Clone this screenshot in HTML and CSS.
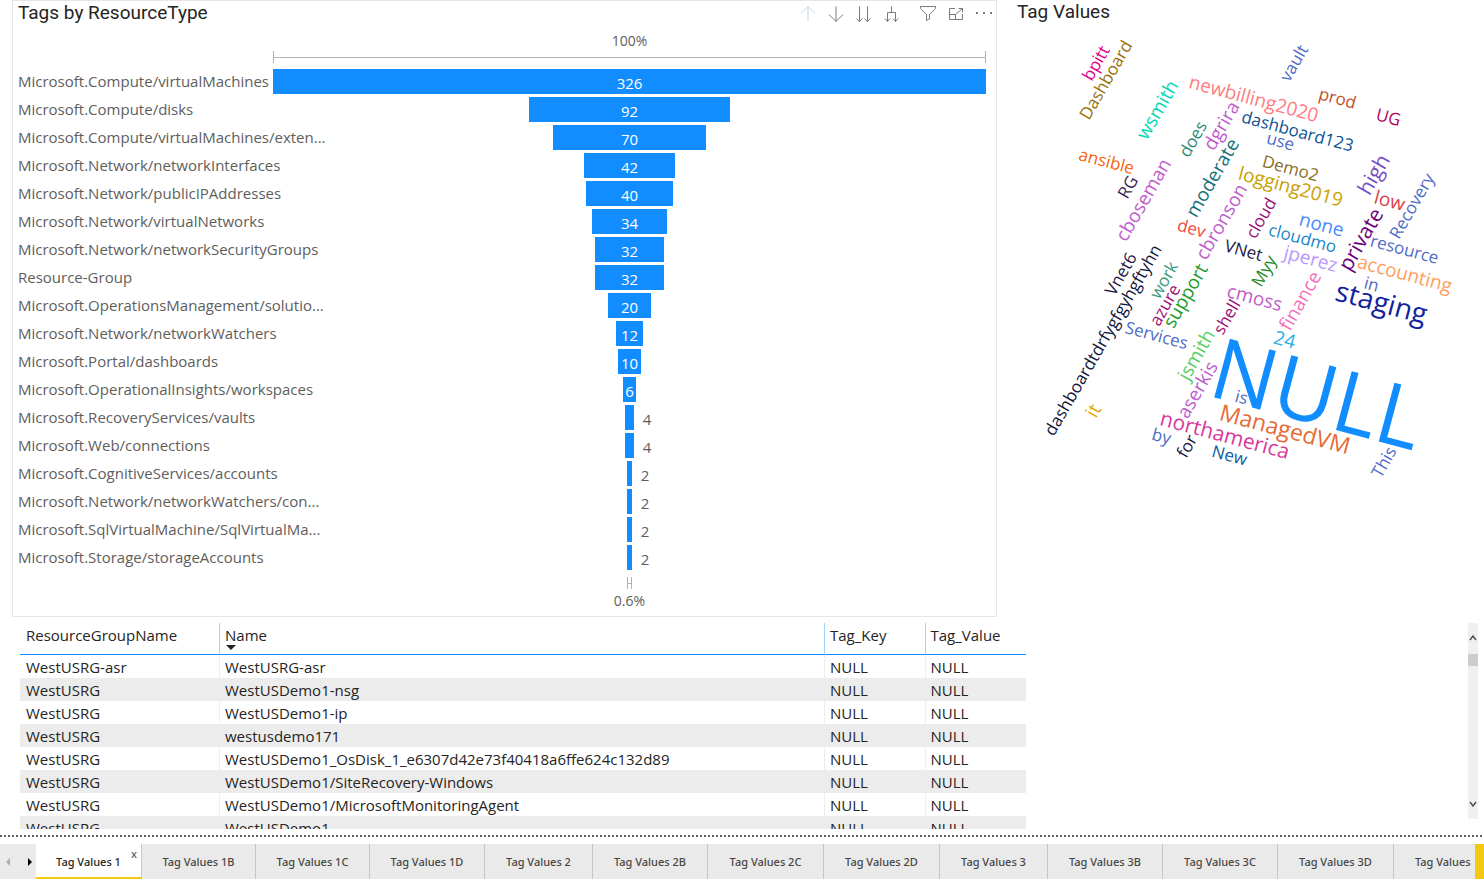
FILE: index.html
```html
<!DOCTYPE html>
<html lang="en">
<head>
<meta charset="utf-8">
<title>Tag Values</title>
<link rel="stylesheet" href="styles.css">
</head>
<body>
<main class="report">
  <div class="top">
    <section class="panel">
      <header class="panel-head">
        <h2 class="title">Tags by ResourceType</h2>
        <div class="tools">
          <button class="tool faint" aria-label="Drill up"><svg viewBox="0 0 16 16"><path d="M8 15.500V.5M1 7.500l7-7 7 7"/></svg></button>
          <button class="tool" aria-label="Drill down"><svg viewBox="0 0 16 16"><path d="M8 .5v15M1 8.500l7 7 7-7"/></svg></button>
          <button class="tool" aria-label="Go to next level"><svg viewBox="0 0 16 16"><path d="M3.500 .5v15M.5 12.500l3 3 3-3M11.500 .5v15M8.500 12.500l3 3 3-3"/></svg></button>
          <button class="tool wide" aria-label="Expand all down one level"><svg viewBox="0 0 16 16"><path d="M7.500 .5v6M3.500 15.500v-9h8v9M1 12.500l2.500 3 2.500-3M9 12.500l2.500 3 2.500-3"/></svg></button>
          <button class="tool" aria-label="Filters"><svg viewBox="0 0 16 16"><path d="M.5 .5h15v2L9.500 8.500v4.500L6.500 14.500V8.500L.5 2.500z"/></svg></button>
          <button class="tool" aria-label="Focus mode"><svg viewBox="0 0 16 16"><path d="M7 2.500H1.500v11h13V8M1.500 8.500h6v5M7.500 8.500l7-6M10.500 2.500h4v4"/></svg></button>
          <button class="tool dots" aria-label="More options"><svg viewBox="0 0 16 16"><path d="M0 6h2v2H0zM7 6h2v2H7zM14 6h2v2h-2z"/></svg></button>
        </div>
      </header>
      <div class="funnel">
        <div class="scale"><span>100%</span><i class="bracket"></i></div>
        <div class="row"><span class="name">Microsoft.Compute/virtualMachines</span><div class="bar" style="width:100%">326</div></div>
        <div class="row"><span class="name">Microsoft.Compute/disks</span><div class="bar" style="width:28.2%">92</div></div>
        <div class="row"><span class="name">Microsoft.Compute/virtualMachines/exten...</span><div class="bar" style="width:21.5%">70</div></div>
        <div class="row"><span class="name">Microsoft.Network/networkInterfaces</span><div class="bar" style="width:12.9%">42</div></div>
        <div class="row"><span class="name">Microsoft.Network/publicIPAddresses</span><div class="bar" style="width:12.3%">40</div></div>
        <div class="row"><span class="name">Microsoft.Network/virtualNetworks</span><div class="bar" style="width:10.4%">34</div></div>
        <div class="row"><span class="name">Microsoft.Network/networkSecurityGroups</span><div class="bar" style="width:9.8%">32</div></div>
        <div class="row"><span class="name">Resource-Group</span><div class="bar" style="width:9.8%">32</div></div>
        <div class="row"><span class="name">Microsoft.OperationsManagement/solutio...</span><div class="bar" style="width:6.1%">20</div></div>
        <div class="row"><span class="name">Microsoft.Network/networkWatchers</span><div class="bar" style="width:3.7%">12</div></div>
        <div class="row"><span class="name">Microsoft.Portal/dashboards</span><div class="bar" style="width:3.1%">10</div></div>
        <div class="row"><span class="name">Microsoft.OperationalInsights/workspaces</span><div class="bar" style="width:1.8%">6</div></div>
        <div class="row"><span class="name">Microsoft.RecoveryServices/vaults</span><div class="bar" style="width:1.2%"><span class="out">4</span></div></div>
        <div class="row"><span class="name">Microsoft.Web/connections</span><div class="bar" style="width:1.2%"><span class="out">4</span></div></div>
        <div class="row"><span class="name">Microsoft.CognitiveServices/accounts</span><div class="bar" style="width:0.6%"><span class="out">2</span></div></div>
        <div class="row"><span class="name">Microsoft.Network/networkWatchers/con...</span><div class="bar" style="width:0.6%"><span class="out">2</span></div></div>
        <div class="row"><span class="name">Microsoft.SqlVirtualMachine/SqlVirtualMa...</span><div class="bar" style="width:0.6%"><span class="out">2</span></div></div>
        <div class="row"><span class="name">Microsoft.Storage/storageAccounts</span><div class="bar" style="width:0.6%"><span class="out">2</span></div></div>
        <div class="scale end"><i class="bracket" style="width:0.8%"></i><span>0.6%</span></div>
      </div>
    </section>
    <section class="cloud">
      <h2 class="title">Tag Values</h2>
      <svg class="words" viewBox="1017 24 467 560" text-anchor="middle">
        <g class="s">
          <text fill="#e3008c" transform="translate(1101 66) rotate(-60)">bpitt</text>
          <text fill="#986f0b" transform="translate(1111 83) rotate(-60)">Dashboard</text>
          <text fill="#2e8b75" transform="translate(1198 142) rotate(-60)">does</text>
          <text fill="#0b5394" transform="translate(1296 137) rotate(15)">dashboard123</text>
          <text fill="#f7630c" transform="translate(1105 167) rotate(15)">ansible</text>
          <text fill="#3b1d52" transform="translate(1133 190) rotate(-60)">RG</text>
          <text fill="#f0483e" transform="translate(1190 234) rotate(15)">dev</text>
          <text fill="#4f6bc6" transform="translate(1299 66) rotate(-60)">vault</text>
          <text fill="#c0501f" transform="translate(1336 104) rotate(15)">prod</text>
          <text fill="#b4005a" transform="translate(1387 123) rotate(15)">UG</text>
          <text fill="#4f6bc6" transform="translate(1279 147) rotate(15)">use</text>
          <text fill="#8a6d1d" transform="translate(1289 174) rotate(15)">Demo2</text>
          <text fill="#4f6bc6" transform="translate(1417 209) rotate(-60)">Recovery</text>
          <text fill="#9a1078" transform="translate(1266 221) rotate(-60)">cloud</text>
          <text fill="#1a86c7" transform="translate(1301 244) rotate(15)">cloudmo</text>
          <text fill="#241a45" transform="translate(1242 256) rotate(15)">VNet</text>
          <text fill="#4f6bc6" transform="translate(1403 255) rotate(15)">resource</text>
          <text fill="#4f6bc6" transform="translate(1370 290) rotate(15)">in</text>
          <text fill="#241a45" transform="translate(1126 277) rotate(-60)">Vnet6</text>
          <text fill="#12163c" transform="translate(1108 343) rotate(-60)">dashboardtdrfygfgyhgftyhn</text>
          <text fill="#3a9a80" transform="translate(1169 283) rotate(-60)">work</text>
          <text fill="#9a1078" transform="translate(1170 308) rotate(-60)">azure</text>
          <text fill="#1c8a1c" transform="translate(1269 274) rotate(-60)">Myy</text>
          <text fill="#9a1078" transform="translate(1232 320) rotate(-60)">shell</text>
          <text fill="#4f6bc6" transform="translate(1155 341) rotate(15)">Services</text>
          <text fill="#4f6bc6" transform="translate(1240 403) rotate(15)">is</text>
          <text fill="#4f6bc6" transform="translate(1160 442) rotate(15)">by</text>
          <text fill="#241a45" transform="translate(1192 449) rotate(-60)">for</text>
          <text fill="#0b5ba8" transform="translate(1228 461) rotate(15)">New</text>
          <text fill="#4f6bc6" transform="translate(1389 465) rotate(-60)">This</text>
        </g>
        <g class="m">
          <text fill="#dca800" transform="translate(1099 414) rotate(-60)">it</text>
          <text fill="#00d8b4" transform="translate(1163 113) rotate(-60)">wsmith</text>
          <text fill="#ff7c80" transform="translate(1252 105) rotate(15)">newbilling2020</text>
          <text fill="#c05bcc" transform="translate(1227 129) rotate(-60)">dgrira</text>
          <text fill="#c05bcc" transform="translate(1149 203) rotate(-60)">cboseman</text>
          <text fill="#137078" transform="translate(1218 181) rotate(-60)">moderate</text>
          <text fill="#c05bcc" transform="translate(1227 225) rotate(-60)">cbronson</text>
          <text fill="#c8a000" transform="translate(1289 193) rotate(15)">logging2019</text>
          <text fill="#dc3f45" transform="translate(1388 207) rotate(15)">low</text>
          <text fill="#4589ff" transform="translate(1320 231) rotate(15)">none</text>
          <text fill="#b898ff" transform="translate(1309 265) rotate(15)">jperez</text>
          <text fill="#ff9d5c" transform="translate(1403 280) rotate(15)">accounting</text>
          <text fill="#1c9a28" transform="translate(1191 299) rotate(-60)">support</text>
          <text fill="#c05bcc" transform="translate(1253 304) rotate(15)">cmoss</text>
          <text fill="#f56fc0" transform="translate(1306 304) rotate(-60)">finance</text>
          <text fill="#2cb0e8" transform="translate(1283 346) rotate(15)">24</text>
          <text fill="#55d060" transform="translate(1202 358) rotate(-60)">jsmith</text>
          <text fill="#c05bcc" transform="translate(1203 393) rotate(-60)">aserkis</text>
        </g>
        <g class="l">
          <text fill="#744ec2" transform="translate(1380 178) rotate(-60)">high</text>
          <text fill="#6b007b" transform="translate(1367 243) rotate(-60)">private</text>
          <text fill="#d9379c" transform="translate(1223 442) rotate(15)">northamerica</text>
        </g>
        <text class="xm" fill="#e66c37" transform="translate(1283 437) rotate(15)">ManagedVM</text>
        <text class="xl" fill="#12239e" transform="translate(1379 312) rotate(15)">staging</text>
        <text class="xxl" fill="#118dff" transform="translate(1310 423) rotate(15)">NULL</text>
      </svg>
    </section>
  </div>
  <section class="grid">
    <table class="data">
      <colgroup><col class="c-group"><col class="c-name"><col class="c-tag"><col class="c-tag"></colgroup>
      <thead><tr><th>ResourceGroupName</th><th class="sorted">Name</th><th>Tag_Key</th><th>Tag_Value</th></tr></thead>
      <tbody>
        <tr><td>WestUSRG-asr</td><td>WestUSRG-asr</td><td>NULL</td><td>NULL</td></tr>
        <tr><td>WestUSRG</td><td>WestUSDemo1-nsg</td><td>NULL</td><td>NULL</td></tr>
        <tr><td>WestUSRG</td><td>WestUSDemo1-ip</td><td>NULL</td><td>NULL</td></tr>
        <tr><td>WestUSRG</td><td>westusdemo171</td><td>NULL</td><td>NULL</td></tr>
        <tr><td>WestUSRG</td><td>WestUSDemo1_OsDisk_1_e6307d42e73f40418a6ffe624c132d89</td><td>NULL</td><td>NULL</td></tr>
        <tr><td>WestUSRG</td><td>WestUSDemo1/SiteRecovery-Windows</td><td>NULL</td><td>NULL</td></tr>
        <tr><td>WestUSRG</td><td>WestUSDemo1/MicrosoftMonitoringAgent</td><td>NULL</td><td>NULL</td></tr>
        <tr><td>WestUSRG</td><td>WestUSDemo1</td><td>NULL</td><td>NULL</td></tr>
      </tbody>
    </table>
    <div class="scroll">
      <button class="step" aria-label="Scroll up"><svg viewBox="0 0 10 10"><path d="M2 7l3-4 3 4"/></svg></button>
      <span class="thumb"></span>
      <button class="step" aria-label="Scroll down"><svg viewBox="0 0 10 10"><path d="M2 3l3 4 3-4"/></svg></button>
    </div>
  </section>
</main>
<div class="divider"></div>
<nav class="tabs">
  <div class="pager">
    <button class="page-btn off" aria-label="Previous pages"><svg viewBox="0 0 4 8"><path d="M4 0v8L0 4z"/></svg></button>
    <button class="page-btn" aria-label="Next pages"><svg viewBox="0 0 4 8"><path d="M0 0v8l4-4z"/></svg></button>
  </div>
  <div class="strip">
    <a class="tab active" href="#">Tag Values 1<span class="close">x</span></a>
    <a class="tab slim" href="#">Tag Values 1B</a>
    <a class="tab slim" href="#">Tag Values 1C</a>
    <a class="tab" href="#">Tag Values 1D</a>
    <a class="tab short" href="#">Tag Values 2</a>
    <a class="tab" href="#">Tag Values 2B</a>
    <a class="tab wide" href="#">Tag Values 2C</a>
    <a class="tab wide" href="#">Tag Values 2D</a>
    <a class="tab short" href="#">Tag Values 3</a>
    <a class="tab" href="#">Tag Values 3B</a>
    <a class="tab" href="#">Tag Values 3C</a>
    <a class="tab wide" href="#">Tag Values 3D</a>
    <a class="tab last" href="#">Tag Values</a>
  </div>
  <button class="add" aria-label="New page"></button>
</nav>
</body>
</html>
```
FILE: styles.css
```css
* { box-sizing: border-box; }
body {
  margin: 0;
  min-height: 100vh;
  display: flex;
  flex-direction: column;
  overflow: hidden;
  background: #fff;
  color: #252423;
  font: 15px/20px "Open Sans", "Noto Sans", sans-serif;
}
button { padding: 0; border: 0; background: none; }
svg { display: block; }

.report { flex: 1; }
.top {
  display: grid;
  grid-template-columns: minmax(0, 985fr) minmax(0, 487fr);
  padding-left: 12px;
}
.title {
  margin: 0;
  font: 400 19px/24px Roboto, sans-serif;
}

.panel {
  border: 1px solid #e6e6e6;
  padding: 0 10px 5px 5px;
}
.panel-head { display: flex; justify-content: space-between; }
.tools { display: flex; gap: 12px; padding-top: 5px; margin-right: -6px; }
.tool { width: 16px; height: 16px; color: #7c7a78; }
.tool.wide { margin-right: 8px; }
.tool.faint { color: #c5d3ea; }
.tool path { fill: none; stroke: currentColor; }
.tool.dots path { fill: currentColor; stroke: none; }

.funnel { color: #605e5c; padding-top: 6px; }
.scale {
  margin-left: 255px;
  display: flex;
  flex-direction: column;
  align-items: center;
  font-size: 14px;
}
.bracket {
  width: 100%;
  height: 12px;
  margin: 0 0 6px;
  border: solid #b3b0ad;
  border-width: 0 1px;
  background: linear-gradient(#b3b0ad, #b3b0ad) center / 100% 1px no-repeat;
}
.scale.end .bracket { margin: 4px 0 2px; }
.row {
  display: grid;
  grid-template-columns: 255px 1fr;
  height: 28px;
}
.name {
  grid-area: 1 / 1 / 2 / 3;
  line-height: 24px;
}
.bar {
  grid-area: 1 / 2 / 2 / 3;
  justify-self: center;
  position: relative;
  height: 25px;
  line-height: 28px;
  background: #118dff;
  color: #fff;
  text-align: center;
}
.out {
  position: absolute;
  left: 100%;
  padding-left: 9px;
  color: #605e5c;
}

.cloud { padding-left: 20px; }
.words { width: 100%; height: auto; }
.s { font-size: 17px; }
.m { font-size: 19px; }
.l { font-size: 21px; }
.xm { font-size: 23px; }
.xl { font-size: 28px; }
.xxl { font-size: 85px; }

.grid {
  display: flex;
  justify-content: space-between;
  height: 206px;
  margin-top: 6px;
  padding: 0 6px 0 20px;
  overflow: hidden;
}
.data {
  flex: 0 1 1006px;
  width: 1006px;
  table-layout: fixed;
  border-collapse: separate;
  border-spacing: 0;
}
.c-group { width: 200px; }
.c-name { width: 605px; }
.data th, .data td {
  height: 23px;
  padding: 1px 5px 0;
  border-right: 1px solid #eee;
  line-height: 22px;
  font-weight: 400;
  text-align: left;
  white-space: nowrap;
}
.data th:first-child, .data td:first-child { padding-left: 6px; }
.data th {
  position: relative;
  height: 32px;
  padding-top: 0;
  padding-bottom: 8px;
  border-bottom: 1px solid #118dff;
  border-right-color: #a0d1ff;
}
.data th:last-child, .data td:last-child { border-right: 0; }
.data tbody tr:nth-child(even) td { background: #edecec; border-right-color: #edecec; }
.sorted::after {
  content: "";
  position: absolute;
  left: 6px;
  bottom: 4px;
  border: 5px solid transparent;
  border-top-color: #252423;
  border-bottom: 0;
}
.scroll {
  display: flex;
  flex-direction: column;
  width: 10px;
  height: 196px;
  background: #f0f0f0;
}
.step { height: 30px; }
.step path { fill: none; stroke: #505050; stroke-width: 1.5; }
.thumb { height: 12px; margin-top: 1px; background: #cdcdcd; }
.thumb + .step { margin-top: auto; }

.divider {
  height: 2px;
  margin: 6px 0 7px;
  background: repeating-linear-gradient(90deg, #605e5c 0 2px, transparent 2px 4px);
}

.tabs {
  display: flex;
  height: 35px;
  background: #eaeaea;
  font-family: "Noto Sans", "Open Sans", sans-serif;
  font-size: 11px;
  font-weight: 500;
}
.pager { display: flex; flex: 0 0 36px; justify-content: space-between; padding: 0 4px 0 6px; }
.page-btn svg { width: 4px; height: 8px; }
.off { opacity: .25; }
.strip { display: flex; flex: 1; min-width: 0; overflow: hidden; }
.tab {
  position: relative;
  flex: 0 0 115px;
  border-right: 1px solid #c8c6c4;
  color: #484644;
  line-height: 35px;
  text-align: center;
  text-decoration: none;
}
.tab.short { flex-basis: 108px; }
.tab.slim { flex-basis: 114px; }
.tab.wide { flex-basis: 116px; }
.tab.last { padding-left: 21px; text-align: left; }
.tab.active {
  flex-basis: 106px;
  background: #fff;
  border-bottom: 2px solid #f2c811;
  color: #252423;
}
.close {
  position: absolute;
  top: 4px;
  right: 4px;
  line-height: 12px;
  color: #605e5c;
}
.add { flex: 0 0 9px; background: #f2c811; }
```
